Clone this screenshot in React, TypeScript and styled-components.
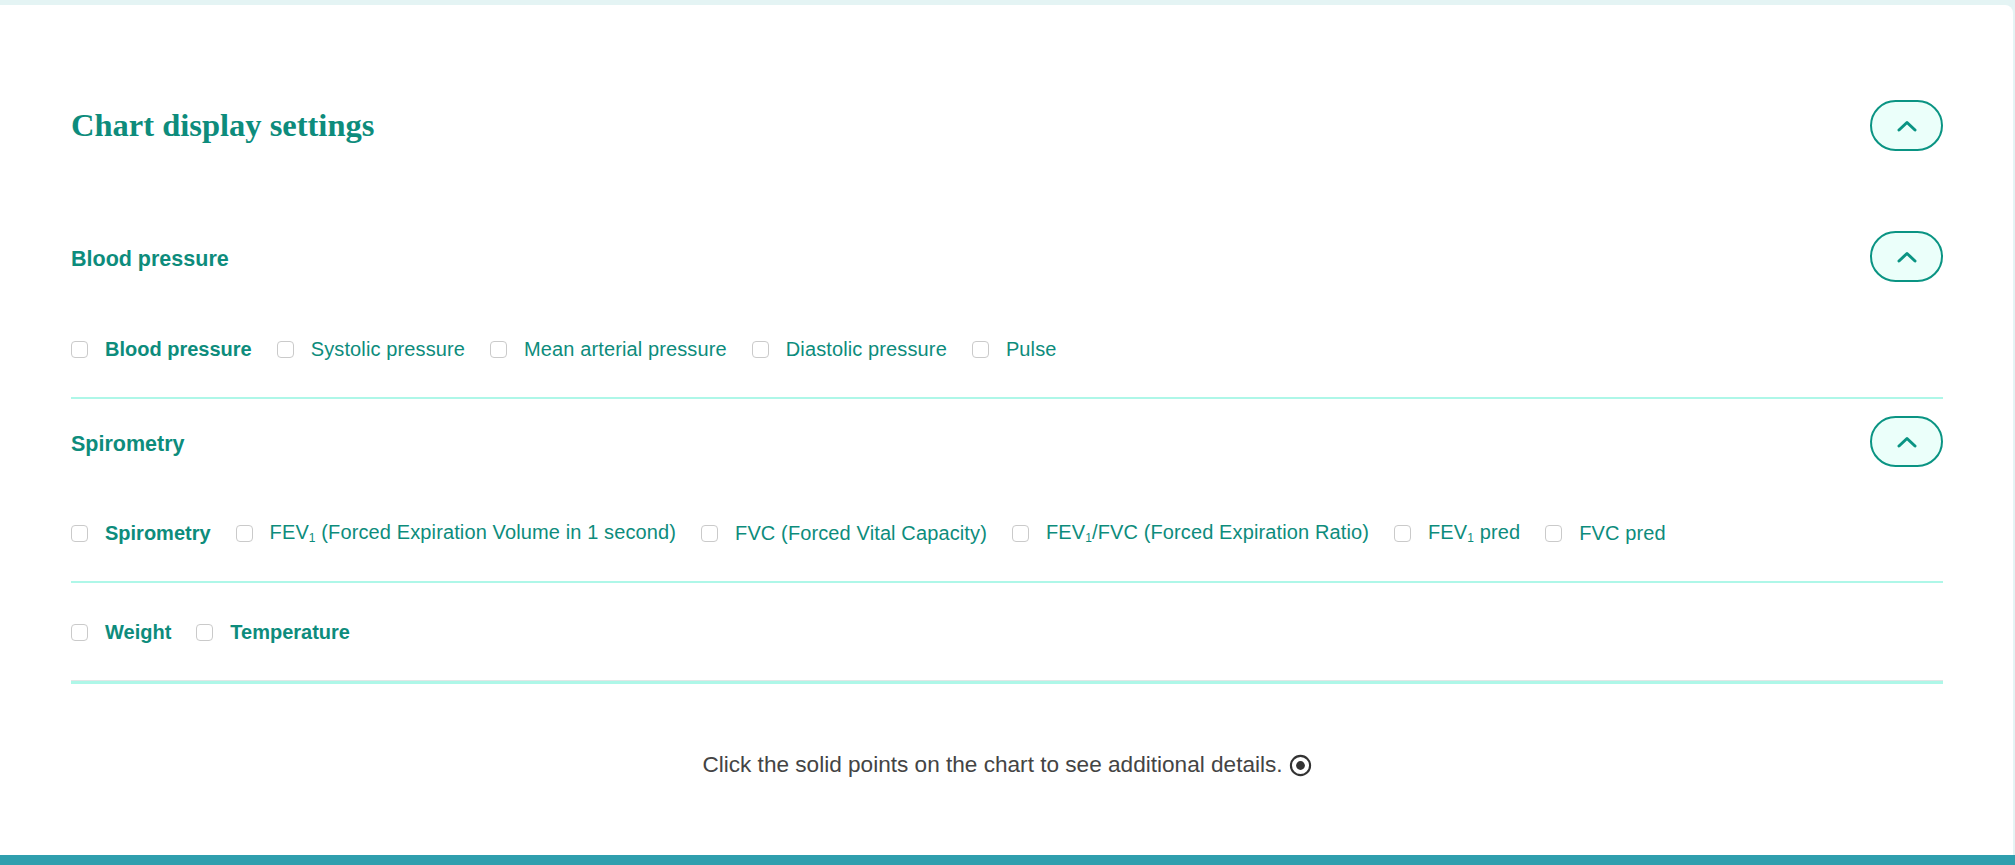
import React from "react";
import styled, { createGlobalStyle } from "styled-components";

const teal = "#0d8c7c";

const GlobalStyle = createGlobalStyle`
  html, body {
    margin: 0;
    padding: 0;
    background: #e4f4f4;
    font-family: "Liberation Sans", Arial, sans-serif;
  }
`;

const Page = styled.div`
  padding-top: 5px;
`;

const Card = styled.div`
  background: #ffffff;
  border-top-right-radius: 8px;
  margin-right: 2px;
  padding: 0 70px 0 71px;
`;

const TitleRow = styled.div`
  display: flex;
  align-items: center;
  justify-content: space-between;
  padding-top: 95px;
`;

const Title = styled.h2`
  margin: 0;
  font-family: "Liberation Serif", "Times New Roman", serif;
  font-weight: 700;
  font-size: 32.5px;
  color: ${teal};
`;

const ToggleButton = styled.button`
  width: 73px;
  height: 51px;
  box-sizing: border-box;
  border: 2px solid #0a9483;
  border-radius: 26px;
  background: #ebfffa;
  display: flex;
  align-items: center;
  justify-content: center;
  padding: 0;
  cursor: pointer;
`;

const SectionHeader = styled.div<{ $top: number }>`
  display: flex;
  align-items: center;
  justify-content: space-between;
  margin-top: ${(p) => p.$top}px;
`;

const SectionTitle = styled.h3`
  margin: 0;
  padding-top: 5px;
  font-size: 21.5px;
  font-weight: 700;
  color: ${teal};
`;

const OptionRow = styled.div<{ $top: number }>`
  display: flex;
  align-items: center;
  gap: 25px;
  height: 26px;
  padding: ${(p) => p.$top}px 0 35px;
`;

const Option = styled.label`
  display: flex;
  align-items: center;
  gap: 17px;
  cursor: pointer;
`;

const Box = styled.input.attrs({ type: "checkbox" })`
  appearance: none;
  margin: 0;
  width: 17px;
  height: 17px;
  border: 1px solid #cacaca;
  border-radius: 4px;
  background: #fff;
  box-sizing: border-box;
`;

const Label = styled.span<{ $bold?: boolean }>`
  font-size: 20px;
  line-height: 26px;
  color: ${teal};
  font-weight: ${(p) => (p.$bold ? 700 : 400)};
  letter-spacing: ${(p) => (p.$bold ? "0px" : "0.12px")};
  white-space: nowrap;
`;

const Sub = styled.span`
  font-size: 0.6em;
  position: relative;
  top: 0.25em;
`;

const Divider = styled.div<{ $thick?: boolean }>`
  height: ${(p) => (p.$thick ? 3 : 2)}px;
  background: #aef7e8;
  border-top: ${(p) => (p.$thick ? "1px solid #e2e6e6" : "none")};
`;

const Hint = styled.p`
  margin: 0;
  padding: 67px 0 76px;
  display: flex;
  align-items: center;
  justify-content: center;
  gap: 6px;
  font-size: 22.6px;
  line-height: 28px;
  color: #444;
`;

const BottomBar = styled.div`
  height: 10px;
  background: #2f9fae;
`;

const Chevron = () => (
  <svg width="20" height="12" viewBox="0 0 20 12" fill="none">
    <polyline
      points="2,10 10,2.5 18,10"
      stroke="#0a9483"
      strokeWidth="3"
      strokeLinecap="round"
      strokeLinejoin="round"
    />
  </svg>
);

const PointIcon = () => (
  <svg width="23" height="23" viewBox="0 0 24 24" fill="none">
    <circle cx="12" cy="12" r="10" stroke="#333" strokeWidth="2.2" />
    <circle cx="12" cy="12" r="4.6" fill="#333" />
  </svg>
);

type Item = { label: React.ReactNode; bold?: boolean };

const Fev = () => (
  <>
    FEV<Sub>1</Sub>
  </>
);

const bloodPressure: Item[] = [
  { label: "Blood pressure", bold: true },
  { label: "Systolic pressure" },
  { label: "Mean arterial pressure" },
  { label: "Diastolic pressure" },
  { label: "Pulse" },
];

const spirometry: Item[] = [
  { label: "Spirometry", bold: true },
  { label: <><Fev /> (Forced Expiration Volume in 1 second)</> },
  { label: "FVC (Forced Vital Capacity)" },
  { label: <><Fev />/FVC (Forced Expiration Ratio)</> },
  { label: <><Fev /> pred</> },
  { label: "FVC pred" },
];

const other: Item[] = [
  { label: "Weight", bold: true },
  { label: "Temperature", bold: true },
];

const Options = ({ items, top }: { items: Item[]; top: number }) => (
  <OptionRow $top={top}>
    {items.map((it, i) => (
      <Option key={i}>
        <Box />
        <Label $bold={it.bold}>{it.label}</Label>
      </Option>
    ))}
  </OptionRow>
);

export default function App() {
  return (
    <Page>
      <GlobalStyle />
      <Card>
        <TitleRow>
          <Title>Chart display settings</Title>
          <ToggleButton aria-label="Collapse">
            <Chevron />
          </ToggleButton>
        </TitleRow>

        <SectionHeader $top={80}>
          <SectionTitle>Blood pressure</SectionTitle>
          <ToggleButton aria-label="Collapse">
            <Chevron />
          </ToggleButton>
        </SectionHeader>
        <Options items={bloodPressure} top={54} />
        <Divider />

        <SectionHeader $top={17}>
          <SectionTitle>Spirometry</SectionTitle>
          <ToggleButton aria-label="Collapse">
            <Chevron />
          </ToggleButton>
        </SectionHeader>
        <Options items={spirometry} top={53} />
        <Divider />

        <Options items={other} top={36} />
        <Divider $thick />

        <Hint>
          Click the solid points on the chart to see additional details.
          <PointIcon />
        </Hint>
      </Card>
      <BottomBar />
    </Page>
  );
}
